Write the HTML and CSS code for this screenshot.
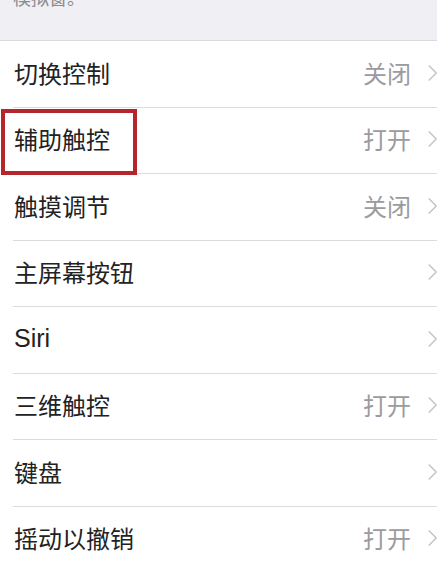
FILE: index.html
```html
<!DOCTYPE html>
<html lang="zh">
<head>
<meta charset="utf-8">
<link rel="stylesheet" href="styles.css">
</head>
<body>
<div class="page">
  <div class="header"><p class="note">模拟窗。</p></div>
  <ul class="list">
    <li class="row"><span class="label">切换控制</span><span class="value">关闭</span><span class="chev"><svg width="12" height="22" viewBox="0 0 12 22"><path d="M1 1 L11 11 L1 21" fill="none" stroke="#c4c4c8" stroke-width="2"/></svg></span></li>
    <li class="row"><span class="label boxed">辅助触控</span><span class="value">打开</span><span class="chev"><svg width="12" height="22" viewBox="0 0 12 22"><path d="M1 1 L11 11 L1 21" fill="none" stroke="#c4c4c8" stroke-width="2"/></svg></span></li>
    <li class="row"><span class="label">触摸调节</span><span class="value">关闭</span><span class="chev"><svg width="12" height="22" viewBox="0 0 12 22"><path d="M1 1 L11 11 L1 21" fill="none" stroke="#c4c4c8" stroke-width="2"/></svg></span></li>
    <li class="row"><span class="label">主屏幕按钮</span><span class="value"></span><span class="chev"><svg width="12" height="22" viewBox="0 0 12 22"><path d="M1 1 L11 11 L1 21" fill="none" stroke="#c4c4c8" stroke-width="2"/></svg></span></li>
    <li class="row"><span class="label latin">Siri</span><span class="value"></span><span class="chev"><svg width="12" height="22" viewBox="0 0 12 22"><path d="M1 1 L11 11 L1 21" fill="none" stroke="#c4c4c8" stroke-width="2"/></svg></span></li>
    <li class="row"><span class="label">三维触控</span><span class="value">打开</span><span class="chev"><svg width="12" height="22" viewBox="0 0 12 22"><path d="M1 1 L11 11 L1 21" fill="none" stroke="#c4c4c8" stroke-width="2"/></svg></span></li>
    <li class="row"><span class="label">键盘</span><span class="value"></span><span class="chev"><svg width="12" height="22" viewBox="0 0 12 22"><path d="M1 1 L11 11 L1 21" fill="none" stroke="#c4c4c8" stroke-width="2"/></svg></span></li>
    <li class="row"><span class="label">摇动以撤销</span><span class="value">打开</span><span class="chev"><svg width="12" height="22" viewBox="0 0 12 22"><path d="M1 1 L11 11 L1 21" fill="none" stroke="#c4c4c8" stroke-width="2"/></svg></span></li>
  </ul>
</div>
</body>
</html>
```

FILE: styles.css
```css
* { box-sizing: border-box; }
html, body {
  margin: 0;
  padding: 0;
  background: #fff;
  font-family: "Noto Sans CJK SC", "Noto Sans", sans-serif;
}
.page {
  width: 437px;
  height: 570px;
  overflow: hidden;
}
.header {
  height: 41px;
  background: #efeff4;
  border-bottom: 1px solid #d9d9de;
  overflow: hidden;
}
.note {
  margin: -13px 0 0 13px;
  font-size: 18px;
  line-height: 20px;
  color: #8a8a8f;
}
.list {
  list-style: none;
  margin: 0;
  padding: 0 0 0 13px;
}
.row {
  display: flex;
  align-items: center;
  height: 66.5px;
  border-bottom: 1px solid #dcdce0;
  padding-bottom: 2px;
}
.label {
  flex: 1;
  font-size: 24px;
  color: #222;
  line-height: 1;
  padding-left: 1px;
}
.label.latin {
  font-family: "Liberation Sans", "Noto Sans CJK SC", sans-serif;
  font-size: 25px;
}
.boxed {
  flex: none;
  position: relative;
}
.boxed::before {
  content: "";
  position: absolute;
  left: -12px;
  top: -18px;
  width: 128px;
  height: 58px;
  border: 4px solid #b4262c;
}
.boxed + .value { margin-left: auto; }
.value {
  font-size: 24px;
  color: #9b9b9f;
  line-height: 1;
  margin-right: 17px;
}
.chev {
  width: 9px;
  overflow: hidden;
  display: flex;
  align-items: center;
}
.chev svg { display: block; }
```
